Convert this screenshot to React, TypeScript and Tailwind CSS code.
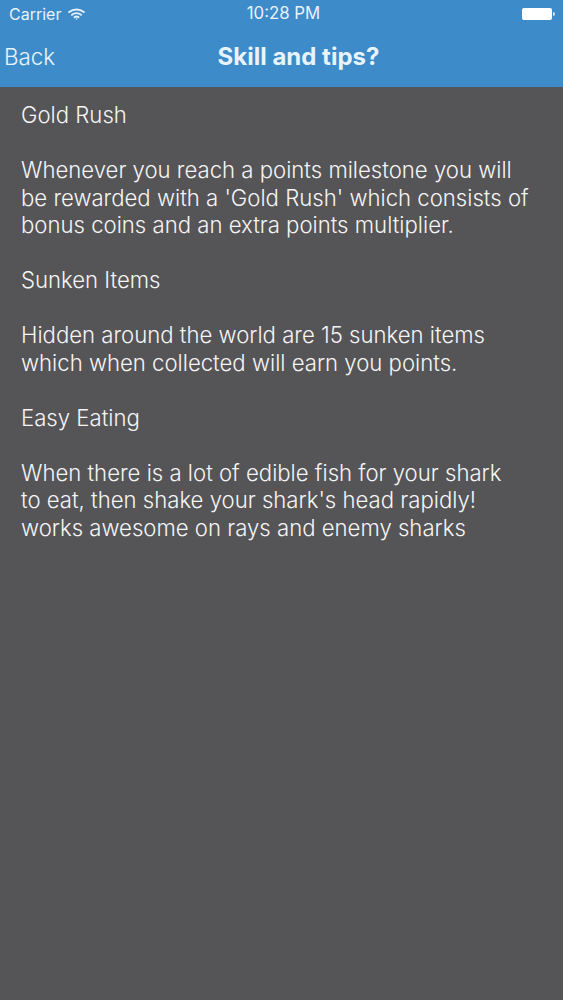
function Wifi() {
  return (
    <svg width="17" height="12" viewBox="0 0 17 12" fill="none" stroke="#e4f0fa" strokeWidth="2" strokeLinecap="round">
      <path d="M1.2 4C5.5 0.5 11.5 0.5 15.8 4" />
      <path d="M4 6.8C6.6 4.8 10.4 4.8 13 6.8" />
      <path d="M6.6 9.2C7.7 8.5 9.3 8.5 10.4 9.2" />
      <circle cx="8.5" cy="11" r="0.8" fill="#e4f0fa" stroke="none" />
    </svg>
  )
}

function Battery() {
  return (
    <div className="flex items-center">
      <div className="w-[30px] h-[12px] bg-white rounded-[2px]" />
      <div className="w-[2px] h-[4px] ml-[1px] bg-[#d5e6f5] rounded-r-sm" />
    </div>
  )
}

export default function App() {
  return (
    <div className="w-[563px] h-[1000px] flex flex-col bg-[#555456] font-['Inter','Liberation_Sans',sans-serif]">
      {/* Header */}
      <div className="h-[87px] shrink-0 bg-[#3d8bc9] text-[#e8f3fb]">
        <div className="h-[28px] flex items-center justify-between pl-[9px] pr-[8px] relative">
          <div className="flex items-center gap-[7px] text-[16px]">
            <span>Carrier</span>
            <Wifi />
          </div>
          <span className="absolute left-[4px] right-0 top-[1px] text-center text-[16.8px]">10:28 PM</span>
          <Battery />
        </div>
        <div className="h-[59px] flex items-center relative pb-[1px]">
          <span className="pl-[4px] text-[22.4px] font-light">Back</span>
          <span className="absolute left-[34px] right-0 text-center text-[24px] font-bold">Skill and tips?</span>
        </div>
      </div>

      {/* Tips */}
      <div className="pt-[15px] px-[21px] text-[22.15px] leading-[27.5px] font-light text-[#f5f5f5]">
        <p>Gold Rush</p>
        <p className="mt-[27.5px]">
          Whenever you reach a points milestone you will<br />
          be rewarded with a 'Gold Rush' which consists of<br />
          bonus coins and an extra points multiplier.
        </p>
        <p className="mt-[27.5px]">Sunken Items</p>
        <p className="mt-[27.5px]">
          Hidden around the world are 15 sunken items<br />
          which when collected will earn you points.
        </p>
        <p className="mt-[27.5px]">Easy Eating</p>
        <p className="mt-[27.5px]">
          When there is a lot of edible fish for your shark<br />
          to eat, then shake your shark's head rapidly!<br />
          works awesome on rays and enemy sharks
        </p>
      </div>
    </div>
  )
}
